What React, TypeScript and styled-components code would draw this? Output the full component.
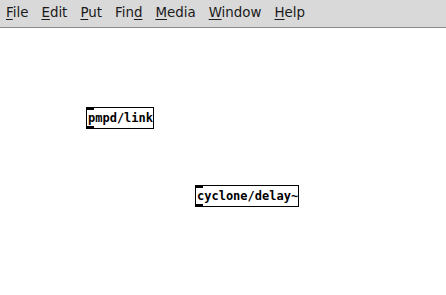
import React from "react";
import styled, { createGlobalStyle } from "styled-components";

const Global = createGlobalStyle`
  html, body { margin: 0; padding: 0; background: #ffffff; }
  body { width: 446px; height: 295px; overflow: hidden; }
`;

const Window = styled.div`
  width: 446px;
  height: 295px;
  display: flex;
  flex-direction: column;
  background: #ffffff;
`;

const MenuBar = styled.div`
  height: 28px;
  flex: none;
  display: flex;
  align-items: flex-start;
  gap: 13px;
  padding-left: 6px;
  box-sizing: border-box;
  padding-top: 5px;
  background: #d9d9d9;
  border-bottom: 1px solid #8c8c8c;
  font-family: "DejaVu Sans", sans-serif;
  font-size: 13.4px;
  color: #1a1a1a;
`;

const MenuItem = styled.span`
  line-height: 16px;
  white-space: pre;
`;

const U = styled.span`
  text-decoration: underline;
  text-underline-offset: 2px;
`;

const Canvas = styled.div`
  position: relative;
  flex: 1;
  background: #ffffff;
`;

const ObjBox = styled.div<{ $x: number; $y: number }>`
  position: absolute;
  left: ${(p) => p.$x}px;
  top: ${(p) => p.$y}px;
  border: 1px solid #000;
  padding: 3px 0 2px 1px;
  font-family: "DejaVu Sans Mono", monospace;
  font-weight: bold;
  font-size: 12px;
  line-height: 15px;
  color: #000;
  white-space: pre;
  background: #fff;
`;

const Port = styled.div<{ $side: "top" | "bottom"; $right?: boolean }>`
  position: absolute;
  ${(p) => (p.$side === "top" ? "top: 0;" : "bottom: 0;")}
  ${(p) => (p.$right ? "right: 0;" : "left: 0;")}
  width: 7px;
  height: 2px;
  background: #000;
`;

const menus: { label: string; u: number }[] = [
  { label: "File", u: 0 },
  { label: "Edit", u: 0 },
  { label: "Put", u: 0 },
  { label: "Find", u: 3 },
  { label: "Media", u: 0 },
  { label: "Window", u: 0 },
  { label: "Help", u: 0 },
];

export default function App() {
  return (
    <>
      <Global />
      <Window>
        <MenuBar>
          {menus.map((m) => (
            <MenuItem key={m.label}>
              {m.label.slice(0, m.u)}
              <U>{m.label[m.u]}</U>
              {m.label.slice(m.u + 1)}
            </MenuItem>
          ))}
        </MenuBar>
        <Canvas>
          <ObjBox $x={86} $y={79}>
            pmpd/link
            <Port $side="top" />
            <Port $side="bottom" />
          </ObjBox>
          <ObjBox $x={195} $y={157}>
            cyclone/delay~
            <Port $side="top" />
            <Port $side="bottom" />
          </ObjBox>
        </Canvas>
      </Window>
    </>
  );
}
